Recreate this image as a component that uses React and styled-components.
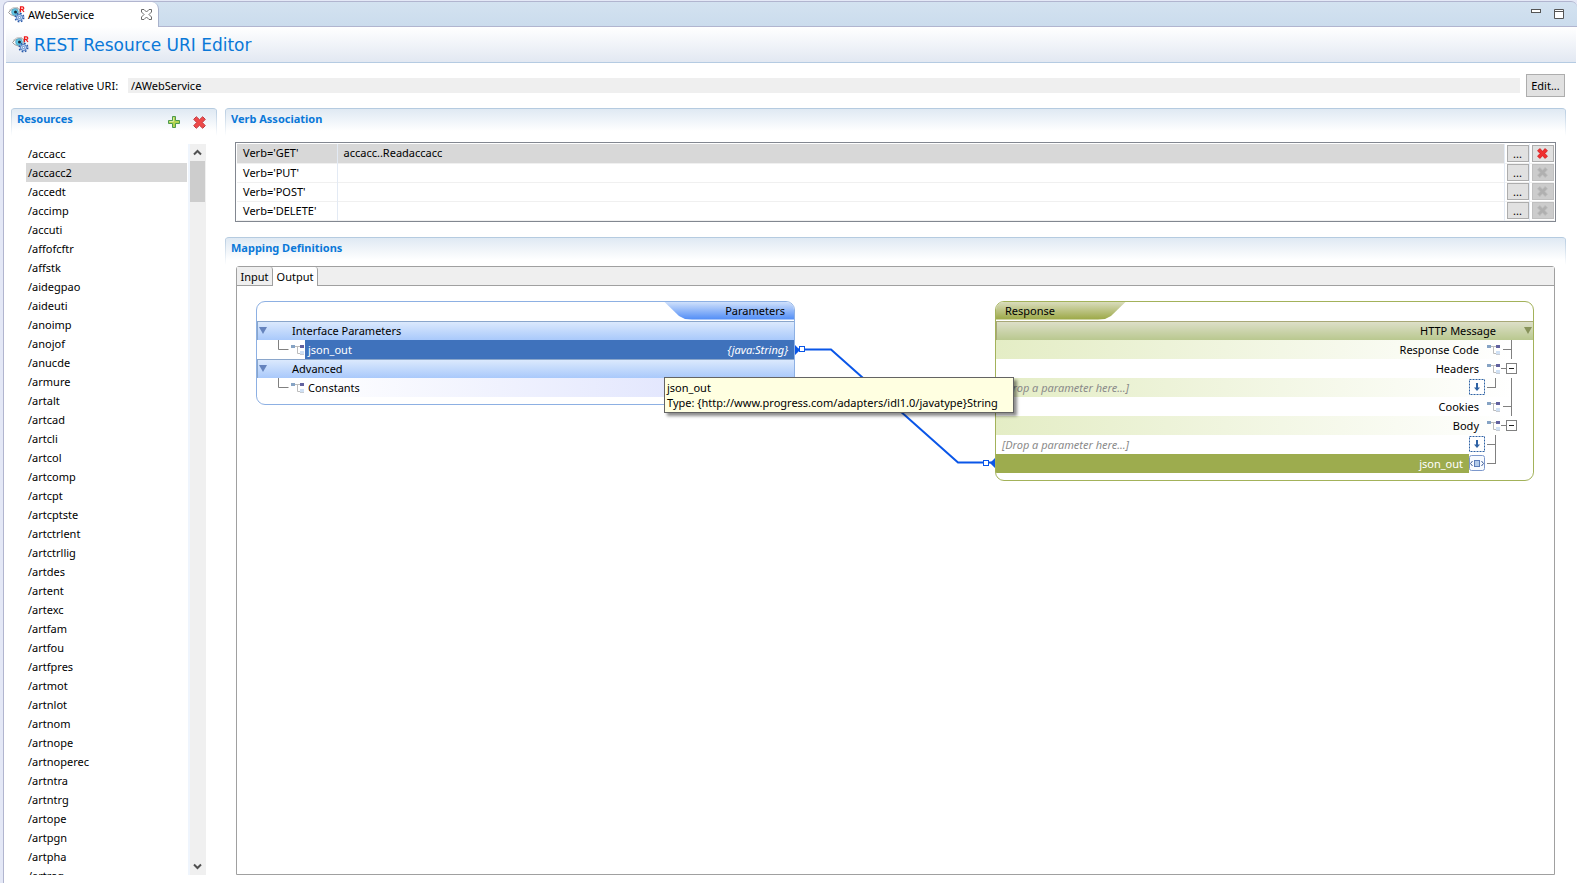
import React, { useState } from "react";
import styled, { createGlobalStyle, css } from "styled-components";

const Global = createGlobalStyle`
  *, *::before, *::after { box-sizing: border-box; }
  body {
    margin: 0;
    background: #e4e8f6;
    color: #000;
    font: 11px/19px "Noto Sans", "Open Sans", sans-serif;
  }
  button, input { font: inherit; color: inherit; }
  button { padding: 0; cursor: default; }
`;

/* ---------- workbench frame ---------- */

const Workbench = styled.div`
  display: flex;
  flex-direction: column;
  height: 100vh;
  min-width: 1100px;
  padding: 1px 0 0 3px;
`;

const TabBar = styled.div`
  display: flex;
  align-items: stretch;
  flex: none;
  height: 26px;
  border: 1px solid #b1b5cf;
  border-right: 0;
  border-radius: 6px 6px 0 0;
  background: linear-gradient(#d3e2f0, #cbdced);
`;

const EditorTab = styled.div`
  display: flex;
  align-items: center;
  width: 155px;
  height: 25px;
  padding: 0 6px 0 4px;
  border-right: 1px solid #a9b2cc;
  border-radius: 5px 7px 0 0;
  background: #fff;
`;

const TabTitle = styled.span`
  flex: 1;
  padding-left: 3px;
`;

const IconButton = styled.button`
  display: flex;
  border: 0;
  background: none;
`;

const WindowButtons = styled.div`
  display: flex;
  gap: 12px;
  margin-left: auto;
  padding: 7px 12px 0 0;
`;

const Editor = styled.main`
  display: flex;
  flex-direction: column;
  flex: 1;
  min-height: 0;
  border-left: 1px solid #b1b5cf;
  background: #fff;
`;

const Header = styled.header`
  display: flex;
  align-items: center;
  flex: none;
  gap: 5px;
  height: 36px;
  margin: 0 1px 0 2px;
  padding-left: 6px;
  border-bottom: 1px solid #b5cbe2;
  background: linear-gradient(#fff, #e2e8f2);
`;

const Title = styled.h1`
  margin: 0;
  color: #0a78d8;
  font: 17px/24px "DejaVu Sans", sans-serif;
`;

const UriRow = styled.div`
  display: flex;
  align-items: center;
  flex: none;
  margin: 10px 12px 0 12px;
  height: 24px;
`;

const UriLabel = styled.label`
  width: 112px;
`;

const UriInput = styled.input`
  flex: 1;
  height: 15px;
  margin-right: 6px;
  padding: 0 3px;
  border: 0;
  background: #efefef;
  outline: none;
`;

const EditButton = styled.button`
  width: 39px;
  height: 23px;
  border: 1px solid #adadad;
  background: #e1e1e1;
`;

const Columns = styled.div`
  display: flex;
  flex: 1;
  gap: 8px;
  min-height: 0;
  margin: 11px 11px 8px 7px;
`;

const Column = styled.div`
  display: flex;
  flex-direction: column;
  flex: 1;
  min-width: 0;
`;

const ResourceColumn = styled(Column)`
  flex: 0 0 206px;
`;

const SectionBar = styled.div`
  display: flex;
  flex: none;
  height: 28px;
  padding: 0 11px 0 6px;
  border-top: 1px solid #b5cbe0;
  border-radius: 4px 4px 0 0;
  background:
    linear-gradient(#b5cbe0, #fff) left / 1px 100% no-repeat,
    linear-gradient(#b5cbe0, #fff) right / 1px 100% no-repeat,
    linear-gradient(#dfe9f3, #fff 22px);
`;

const SectionTitle = styled.h2`
  flex: 1;
  margin: 0;
  color: #0a78d8;
  font-size: 11px;
  line-height: 19px;
  font-weight: 700;
`;

const Tools = styled.div`
  display: flex;
  align-items: center;
  gap: 12px;
  height: 26px;
`;

/* ---------- resource list ---------- */

const ListArea = styled.div`
  display: flex;
  flex: 1;
  min-height: 0;
  margin-top: 8px;
  padding: 0 11px 0 15px;
`;

const List = styled.ul`
  flex: 1;
  margin: 0;
  padding: 0;
  overflow-y: auto;
  scrollbar-width: none;
  list-style: none;
`;

const ResourceButton = styled.button`
  display: block;
  width: 100%;
  height: 19px;
  padding-left: 2px;
  border: 0;
  background: ${(p) => (p.$selected ? "#d8d8d8" : "transparent")};
  text-align: left;
  line-height: 19px;
`;

const ScrollTrack = styled.div`
  display: flex;
  flex-direction: column;
  width: 18px;
  margin-left: 1px;
  border-left: 2px solid #eff5fd;
  background: #f0f0f0;
`;

const ScrollArrow = styled.button`
  display: flex;
  align-items: center;
  justify-content: center;
  height: 17px;
  padding-right: 1px;
  border: 0;
  background: none;
`;

const ScrollThumb = styled.div`
  height: 41px;
  margin-right: 1px;
  margin-bottom: auto;
  background: #cdcdcd;
`;

/* ---------- verb table ---------- */

const VerbFrame = styled.div`
  flex: none;
  margin: 6px 10px 15px 10px;
  padding: 1px 1px 0;
  border: 1px solid #828790;
`;

const VerbTable = styled.table`
  width: 100%;
  border-collapse: collapse;
  table-layout: fixed;
`;

const VerbRow = styled.tr`
  height: 19px;
  border-bottom: 1px solid #f0f0f0;
  background: ${(p) => (p.$selected ? "#d8d8d8" : "#fff")};
`;

const VerbName = styled.th`
  width: 100px;
  padding: 0 0 0 6px;
  border-right: 1px solid #e3eaf4;
  font-weight: 400;
  line-height: 18px;
  text-align: left;
`;

const VerbTarget = styled.td`
  padding: 0 0 0 6px;
  line-height: 18px;
`;

const VerbAction = styled.td`
  width: 25px;
  padding: 0 0 0 2px;
  border-left: 1px solid #e3eaf4;
  background: #fff;
  line-height: 0;
`;

const CellButton = styled.button`
  display: flex;
  align-items: center;
  justify-content: center;
  width: 22px;
  height: 17px;
  border: 1px solid #adadad;
  background: #e1e1e1;
  line-height: 15px;
  &:disabled {
    border-color: #bfbfbf;
    background: #cccccc;
  }
`;

/* ---------- mapping canvas ---------- */

const TabFolder = styled.div`
  display: flex;
  flex-direction: column;
  flex: 1;
  margin: 1px 11px 0 11px;
  border: 1px solid #a0a0a0;
  border-radius: 3px 3px 0 0;
`;

const TabStrip = styled.div`
  display: flex;
  flex: none;
  height: 19px;
  border-bottom: 1px solid #a0a0a0;
  background: #efefef;
`;

const FolderTab = styled.button`
  height: ${(p) => (p.$active ? "19px" : "18px")};
  width: ${(p) => (p.$active ? "45px" : "36px")};
  border: 0;
  border-right: 1px solid #a0a0a0;
  border-radius: 0 3px 0 0;
  background: ${(p) => (p.$active ? "#fff" : "transparent")};
`;

const Canvas = styled.div`
  display: flex;
  align-items: flex-start;
  padding: 15px 20px 15px 19px;
`;

const blue = {
  line: "#8db0e3",
  cat: "linear-gradient(#dbe9fd, #a9c9fb)",
  catLine: "#8aa6cb",
  sel: "#3f72bc",
  tint: "linear-gradient(90deg, #fff 8%, #dadffd)",
};

const green = {
  line: "#a3b25a",
  cat: "linear-gradient(#dddfc8, #b9c88f)",
  catLine: "#a8a878",
  sel: "#9dac4e",
  tint: "linear-gradient(90deg, #e4edc5, #fff 96%)",
};

const Panel = styled.section`
  flex: 1;
  min-width: 0;
  padding-bottom: 7px;
  border: 1px solid ${(p) => p.$tone.line};
  border-radius: 9px;
  overflow: hidden;
  background: #fff;
`;

const Banner = styled.div`
  display: flex;
  height: 19px;
  justify-content: ${(p) => (p.$end ? "flex-end" : "flex-start")};
`;

const BannerTitle = styled.h3`
  width: 130px;
  height: 18px;
  margin: 0;
  padding: 0 9px;
  font-size: 11px;
  font-weight: 400;
  line-height: 18px;
  ${(p) =>
    p.$end
      ? css`
          text-align: right;
          background: linear-gradient(#cfe0fb, #4e8bf6);
          clip-path: polygon(0 0, 100% 0, 100% 100%, 28px 100%, 21px 97%, 15px 80%);
        `
      : css`
          text-align: left;
          background: linear-gradient(#d9dcbc, #9aa743);
          clip-path: polygon(0 0, 100% 0, 115px 80%, 109px 97%, 102px 100%, 0 100%);
        `}
`;

const Category = styled.div`
  display: flex;
  align-items: center;
  height: 19px;
  border-top: 1px solid ${(p) => p.$tone.catLine};
  border-left: 1px solid ${(p) => p.$tone.catLine};
  background: ${(p) => p.$tone.cat};
`;

const CategoryName = styled.span`
  flex: 1;
  ${(p) => (p.$end ? "padding-right: 27px; text-align: right;" : "padding-left: 24px;")}
`;

const Twisty = styled.button`
  display: flex;
  justify-content: center;
  width: 10px;
  border: 0;
  background: none;
`;

const Node = styled.div`
  display: flex;
  align-items: stretch;
  height: 19px;
  background: ${(p) => (p.$tinted ? p.$tone.tint : "#fff")};
  svg { flex: none; }
`;

const NodeBody = styled.div`
  display: flex;
  flex: 1;
  padding: ${(p) => p.$pad || "0 3px"};
  ${(p) => p.$fill && css`background: ${p.$fill}; color: #fff;`}
`;

const NodeName = styled.span`
  ${(p) => p.$end && "margin-left: auto;"}
`;

const NodeType = styled.em`
  margin-left: auto;
  padding-right: 3px;
`;

const DropHint = styled.em`
  padding-left: 3px;
  color: #8a8a8a;
`;

const Link = styled.div`
  position: relative;
  flex: 0 0 200px;
  height: 181px;
  svg { display: block; }
`;

const Tooltip = styled.div`
  position: absolute;
  top: 76px;
  left: -131px;
  min-width: 350px;
  padding: 2px 7px 2px 2px;
  border: 1px solid #646464;
  background: #ffffe1;
  box-shadow: 3px 3px 3px rgba(0, 0, 0, 0.45);
  line-height: 15px;
  white-space: nowrap;
`;

/* ---------- drawings ---------- */

const ServiceIcon = () => (
  <svg width="17" height="17" viewBox="0 0 17 17" aria-hidden="true">
    <path d="M.5 6.500Q4 1.500 11.500 3L12 8Q8 11.500 4.500 9.500Q2 8.500.5 6.500Z" fill="#f8f8f8" stroke="#9a9a9a" />
    <path d="M1 4.500Q4.500.500 10 1.500" fill="none" stroke="#c4c4c4" />
    <circle cx="7" cy="6" r="3.300" fill="#62c8e6" stroke="#4aa3c6" strokeWidth=".8" />
    <circle cx="7.500" cy="6" r="1.500" fill="#1a2a3a" />
    <path d="M12.500 6V.800H14.500Q15.800.800 15.800 2.200Q15.800 3.400 14.500 3.400H12.500M14 3.400L16 6" fill="none" stroke="#f01414" strokeWidth="1.200" />
    <circle cx="11.500" cy="11.500" r="4.200" fill="none" stroke="#2a5aaa" strokeWidth="1.600" strokeDasharray="1.700 1.600" />
    <circle cx="11.500" cy="11.500" r="3" fill="#d8e8fc" stroke="#3a6cba" />
    <circle cx="11.500" cy="11.500" r="1.200" fill="#fff" stroke="#3a6cba" strokeWidth=".8" />
  </svg>
);

const TabCloseIcon = () => (
  <svg width="11" height="11" viewBox="0 0 11 11" aria-hidden="true">
    <path d="M.5.5h2.500l2.500 2.500L8 .5h2.500V3L8 5.500l2.500 2.500v2.500H8L5.500 8 3 10.500H.5V8L3 5.500.5 3z" fill="#fff" stroke="#6a6a6a" />
  </svg>
);

const PlusIcon = () => (
  <svg width="13" height="13" viewBox="0 0 13 13" aria-hidden="true">
    <path d="M4.500.5h3v4h4v3h-4v4h-3v-4h-4v-3h4z" fill="#b4d450" stroke="#4d9a50" />
    <path d="M5.500 1.500v4h-4" fill="none" stroke="#d8ea9c" />
  </svg>
);

const CrossIcon = ({ size = 13, fill = "#ee4a4a", stroke = "#c23a40" }) => (
  <svg width={size} height={size} viewBox="0 0 13 13" aria-hidden="true">
    <path d="M3.300.7 6.500 3.700 9.700.7 12.300 3.300 9.300 6.500l3 3.200-2.600 2.600-3.200-3-3.200 3L.7 9.700l3-3.200-3-3.200z" fill={fill} stroke={stroke} />
  </svg>
);

const Chevron = ({ down }) => (
  <svg width="9" height="7" viewBox="0 0 9 7" aria-hidden="true">
    <path d={down ? "M1 1.500l3.500 3.500L8 1.500" : "M1 5.500L4.500 2 8 5.500"} fill="none" stroke="#505050" strokeWidth="2" />
  </svg>
);

const Triangle = ({ fill }) => (
  <svg width="8" height="7" viewBox="0 0 8 7" aria-hidden="true">
    <path d="M0 0h8L4 7z" fill={fill} />
  </svg>
);

const NodeIcon = () => (
  <svg width="14" height="19" viewBox="0 0 14 19" aria-hidden="true">
    <path d="M3 6.500h7M6.500 7v6.500h4" fill="none" stroke="#bcbcbc" />
    <rect x="0" y="5" width="4" height="3" fill="#86a3c4" />
    <rect x="9" y="5" width="4" height="3" fill="#62629f" />
    <rect x="9" y="11" width="4" height="3" fill="#cfe0f4" />
    <path d="M9 14.500h4" stroke="#c8ccd2" />
  </svg>
);

const LeftElbow = () => (
  <svg width="34" height="19" viewBox="0 0 34 19" aria-hidden="true">
    <path d="M21.500 0v9.500h10" fill="none" stroke="#808080" />
  </svg>
);

const trunks = {
  leaf: "M2 9.500h8.500M10.500 0v19",
  branch: "M0 9.500h5",
};

const NodeGuide = ({ kind }) => (
  <svg width="32" height="19" viewBox="0 0 32 19" aria-hidden="true">
    <path d={trunks[kind]} fill="none" stroke="#808080" />
    {kind === "branch" && (
      <>
        <rect x="5.500" y="4.500" width="10" height="10" fill="#fff" stroke="#808080" />
        <path d="M8 9.500h5" stroke="#222" />
      </>
    )}
  </svg>
);

const SlotGuide = ({ through, root }) => (
  <svg width="48" height="19" viewBox="0 0 48 19" aria-hidden="true">
    <path d={`M2 9.500h8.500M10.500 0v${through ? 19 : 10}${root ? "M26.500 0v19" : ""}`} fill="none" stroke="#808080" />
  </svg>
);

const DropIcon = () => (
  <svg width="16" height="19" viewBox="0 0 16 19" aria-hidden="true">
    <rect x=".5" y="1.500" width="15" height="15" fill="#fff" stroke="#2f62a4" strokeDasharray="2 1" />
    <path d="M8 5v6" stroke="#2f62a4" strokeWidth="2" />
    <path d="M5 9.500h6L8 13z" fill="#2f62a4" />
  </svg>
);

const ElementIcon = () => (
  <svg width="16" height="19" viewBox="0 0 16 19" aria-hidden="true">
    <rect x=".5" y="1.500" width="15" height="15" rx="2" fill="#f8fbff" stroke="#7d98cc" />
    <rect x="5.500" y="6.500" width="5" height="6" fill="#b3cbe9" stroke="#5a7cb8" />
    <path d="M3.500 7L1.500 9.500l2 2.500M12.500 7l2 2.500-2 2.500" fill="none" stroke="#3c5b96" />
  </svg>
);

const LinkDrawing = () => (
  <svg width="200" height="181" viewBox="0 0 200 181" aria-hidden="true">
    <path d="M0 44l5 5-5 5zM200 157l-5 5 5 5z" fill="#0a56e8" />
    <path d="M2 48.500h34L163 161.500h35" fill="none" stroke="#0a56e8" strokeWidth="2" />
    <rect x="4.500" y="45.500" width="5" height="5" fill="#fff" stroke="#0a56e8" />
    <rect x="188.500" y="159.500" width="5" height="5" fill="#fff" stroke="#0a56e8" />
  </svg>
);

/* ---------- data ---------- */

const resources = [
  "accacc", "accacc2", "accedt", "accimp", "accuti", "affofcftr", "affstk", "aidegpao",
  "aideuti", "anoimp", "anojof", "anucde", "armure", "artalt", "artcad", "artcli", "artcol",
  "artcomp", "artcpt", "artcptste", "artctrlent", "artctrllig", "artdes", "artent", "artexc",
  "artfam", "artfou", "artfpres", "artmot", "artnlot", "artnom", "artnope", "artnoperec",
  "artntra", "artntrg", "artope", "artpgn", "artpha", "artreg",
];

const verbs = [
  { verb: "GET", target: "accacc..Readaccacc" },
  { verb: "PUT" },
  { verb: "POST" },
  { verb: "DELETE" },
];

const responseNodes = [
  { name: "Response Code", kind: "leaf", tinted: true },
  { name: "Headers", kind: "branch" },
  { drop: true, tinted: true, root: true },
  { name: "Cookies", kind: "leaf" },
  { name: "Body", kind: "branch", tinted: true },
  { drop: true, through: true },
];

const ResponseNode = ({ name, kind, drop, tinted, through, root }) => (
  <Node $tone={green} $tinted={tinted}>
    {drop ? (
      <>
        <NodeBody>
          <DropHint>[Drop a parameter here...]</DropHint>
        </NodeBody>
        <DropIcon />
        <SlotGuide through={through} root={root} />
      </>
    ) : (
      <>
        <NodeBody $pad="0 8px">
          <NodeName $end>{name}</NodeName>
        </NodeBody>
        <NodeIcon />
        <NodeGuide kind={kind} />
      </>
    )}
  </Node>
);

export default function App() {
  const [selected, setSelected] = useState("accacc2");
  return (
    <>
      <Global />
      <Workbench>
        <TabBar>
          <EditorTab>
            <ServiceIcon />
            <TabTitle>AWebService</TabTitle>
            <IconButton aria-label="Close editor">
              <TabCloseIcon />
            </IconButton>
          </EditorTab>
          <WindowButtons>
            <IconButton aria-label="Minimize">
              <svg width="11" height="11" viewBox="0 0 11 11">
                <rect x=".5" y=".5" width="9" height="3" fill="#fff" stroke="#555" />
              </svg>
            </IconButton>
            <IconButton aria-label="Maximize">
              <svg width="11" height="11" viewBox="0 0 11 11">
                <path d="M.5.5h9v9h-9zM.5 2.500h9" fill="#fff" stroke="#555" />
              </svg>
            </IconButton>
          </WindowButtons>
        </TabBar>
        <Editor>
          <Header>
            <ServiceIcon />
            <Title>REST Resource URI Editor</Title>
          </Header>
          <UriRow>
            <UriLabel htmlFor="uri">Service relative URI:</UriLabel>
            <UriInput id="uri" readOnly value="/AWebService" />
            <EditButton>Edit...</EditButton>
          </UriRow>
          <Columns>
            <ResourceColumn>
              <SectionBar>
                <SectionTitle>Resources</SectionTitle>
                <Tools>
                  <IconButton aria-label="Add resource"><PlusIcon /></IconButton>
                  <IconButton aria-label="Remove resource"><CrossIcon /></IconButton>
                </Tools>
              </SectionBar>
              <ListArea>
                <List>
                  {resources.map((name) => (
                    <li key={name}>
                      <ResourceButton $selected={name === selected} onClick={() => setSelected(name)}>
                        /{name}
                      </ResourceButton>
                    </li>
                  ))}
                </List>
                <ScrollTrack>
                  <ScrollArrow aria-label="Scroll up"><Chevron /></ScrollArrow>
                  <ScrollThumb />
                  <ScrollArrow aria-label="Scroll down"><Chevron down /></ScrollArrow>
                </ScrollTrack>
              </ListArea>
            </ResourceColumn>
            <Column>
              <SectionBar>
                <SectionTitle>Verb Association</SectionTitle>
              </SectionBar>
              <VerbFrame>
                <VerbTable>
                  <tbody>
                    {verbs.map(({ verb, target }) => (
                      <VerbRow key={verb} $selected={Boolean(target)}>
                        <VerbName scope="row">Verb='{verb}'</VerbName>
                        <VerbTarget>{target}</VerbTarget>
                        <VerbAction>
                          <CellButton aria-label={`Choose operation for ${verb}`}>...</CellButton>
                        </VerbAction>
                        <VerbAction>
                          <CellButton disabled={!target} aria-label={`Clear ${verb}`}>
                            {target ? (
                              <CrossIcon size={11} fill="#f03030" stroke="#d41c1c" />
                            ) : (
                              <CrossIcon size={11} fill="#b0b0b0" stroke="#bcbcbc" />
                            )}
                          </CellButton>
                        </VerbAction>
                      </VerbRow>
                    ))}
                  </tbody>
                </VerbTable>
              </VerbFrame>
              <SectionBar>
                <SectionTitle>Mapping Definitions</SectionTitle>
              </SectionBar>
              <TabFolder>
                <TabStrip role="tablist">
                  <FolderTab role="tab" aria-selected="false">Input</FolderTab>
                  <FolderTab role="tab" aria-selected="true" $active>Output</FolderTab>
                </TabStrip>
                <Canvas>
                  <Panel $tone={blue}>
                    <Banner $end>
                      <BannerTitle $end>Parameters</BannerTitle>
                    </Banner>
                    <Category $tone={blue}>
                      <Twisty aria-label="Collapse Interface Parameters"><Triangle fill="#6583bd" /></Twisty>
                      <CategoryName>Interface Parameters</CategoryName>
                    </Category>
                    <Node $tone={blue}>
                      <LeftElbow />
                      <NodeIcon />
                      <NodeBody $fill={blue.sel}>
                        <NodeName>json_out</NodeName>
                        <NodeType>{"{java:String}"}</NodeType>
                      </NodeBody>
                    </Node>
                    <Category $tone={blue}>
                      <Twisty aria-label="Collapse Advanced"><Triangle fill="#6583bd" /></Twisty>
                      <CategoryName>Advanced</CategoryName>
                    </Category>
                    <Node $tone={blue} $tinted>
                      <LeftElbow />
                      <NodeIcon />
                      <NodeBody>
                        <NodeName>Constants</NodeName>
                      </NodeBody>
                    </Node>
                  </Panel>
                  <Link>
                    <LinkDrawing />
                    <Tooltip role="tooltip">
                      json_out
                      <br />
                      {"Type: {http://www.progress.com/adapters/idl1.0/javatype}String"}
                    </Tooltip>
                  </Link>
                  <Panel $tone={green}>
                    <Banner>
                      <BannerTitle>Response</BannerTitle>
                    </Banner>
                    <Category $tone={green}>
                      <CategoryName $end>HTTP Message</CategoryName>
                      <Twisty aria-label="Collapse HTTP Message"><Triangle fill="#87925a" /></Twisty>
                    </Category>
                    {responseNodes.map((node, i) => (
                      <ResponseNode key={i} {...node} />
                    ))}
                    <Node $tone={green}>
                      <NodeBody $fill={green.sel} $pad="0 6px">
                        <NodeName $end>json_out</NodeName>
                      </NodeBody>
                      <ElementIcon />
                      <SlotGuide />
                    </Node>
                  </Panel>
                </Canvas>
              </TabFolder>
            </Column>
          </Columns>
        </Editor>
      </Workbench>
    </>
  );
}
